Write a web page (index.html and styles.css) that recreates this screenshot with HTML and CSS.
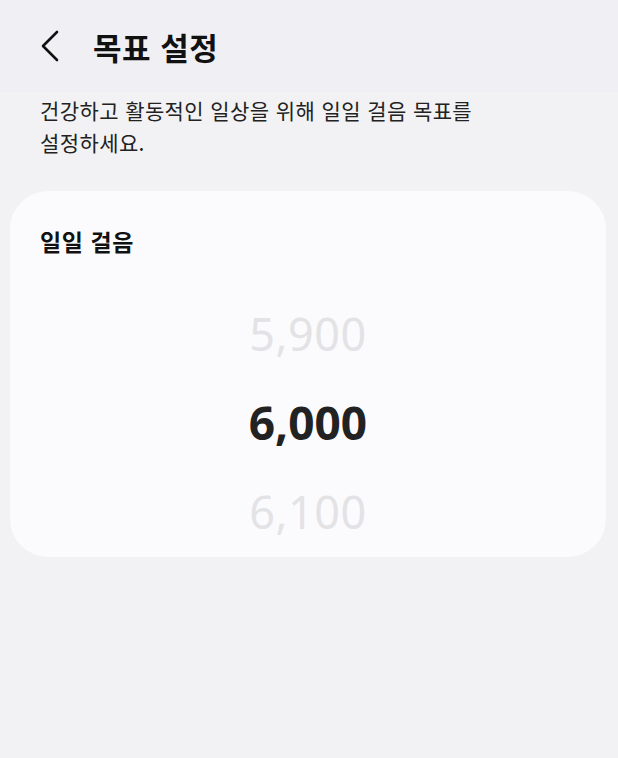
FILE: index.html
```html
<!DOCTYPE html>
<html lang="ko">
<head>
  <meta charset="UTF-8">
  <title>목표 설정</title>
  <link rel="stylesheet" href="styles.css">
</head>
<body>

  <header class="top-bar">
    <button class="back-btn" aria-label="뒤로">
      <svg width="20" height="32" viewBox="0 0 20 32">
        <path d="M17 2 L3 16 L17 30" fill="none" stroke="#111" stroke-width="2.6" stroke-linecap="round" stroke-linejoin="round"/>
      </svg>
    </button>
    <h1>목표 설정</h1>
  </header>

  <p class="desc">건강하고 활동적인 일상을 위해 일일 걸음 목표를<br>설정하세요.</p>

  <section class="card">
    <h2>일일 걸음</h2>
    <div class="picker">
      <div class="value dim">5,900</div>
      <div class="value current">6,000</div>
      <div class="value dim">6,100</div>
    </div>
  </section>

</body>
</html>
```

FILE: styles.css
```css
body {
  margin: 0;
  font-family: "Noto Sans CJK KR", "Noto Sans", sans-serif;
  background: #f2f2f4;
  color: #111;
}

.top-bar {
  display: flex;
  align-items: center;
  height: 92px;
  padding: 0 0 0 40px;
  background: #f0f0f4;
}

.back-btn {
  background: none;
  border: none;
  padding: 0;
  margin-right: 33px;
  display: flex;
  cursor: pointer;
}

.top-bar h1 {
  margin: 0;
  font-size: 31px;
  font-weight: 700;
  letter-spacing: 0.5px;
}

.desc {
  margin: 2px 0 0;
  padding: 0 30px 0 40px;
  font-size: 21px;
  line-height: 32px;
  letter-spacing: 0.4px;
  color: #222;
}

.card {
  margin: 33px 12px 0 10px;
  height: 366px;
  background: #fbfbfd;
  border-radius: 38px;
  padding: 30px 30px 0;
  box-sizing: border-box;
}

.card h2 {
  margin: 0;
  font-size: 23px;
  font-weight: 700;
  line-height: 40px;
  letter-spacing: 0.6px;
}

.picker {
  margin-top: 28px;
  display: flex;
  flex-direction: column;
  align-items: center;
}

.value {
  font-family: "Noto Sans", "Open Sans", sans-serif;
  height: 89px;
  line-height: 89px;
}

.dim {
  font-size: 45px;
  color: #e3e3e6;
  letter-spacing: 0.5px;
}

.current {
  font-size: 46px;
  font-weight: 700;
  color: #222;
}
```
